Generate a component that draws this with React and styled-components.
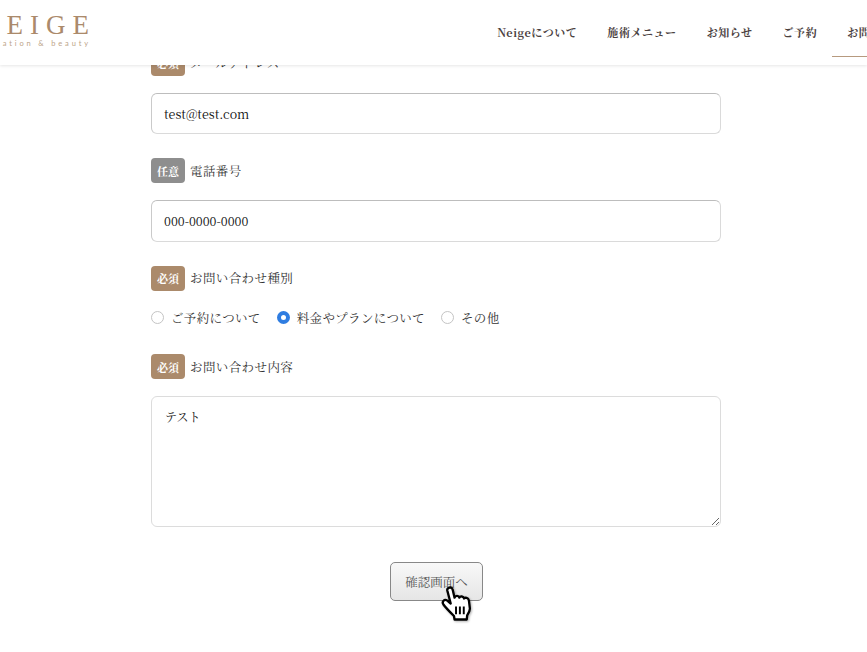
import React from 'react';
import styled, { createGlobalStyle } from 'styled-components';

const GlobalStyle = createGlobalStyle`
  html, body {
    margin: 0;
    padding: 0;
    background: #fff;
    overflow: hidden;
  }
  * { box-sizing: border-box; }
`;

const serif = `"Noto Serif CJK JP", "Liberation Serif", "Noto Sans CJK JP", serif`;

const Page = styled.div`
  position: relative;
  width: 867px;
  height: 652px;
  overflow: hidden;
  font-family: ${serif};
  color: #222;
`;

const Header = styled.header`
  position: absolute;
  top: 0;
  left: 0;
  right: 0;
  height: 65px;
  background: #fff;
  box-shadow: 0 1px 3px rgba(0, 0, 0, 0.1);
  display: flex;
  justify-content: space-between;
  z-index: 2;
`;

const Logo = styled.div`
  margin: 11px 0 0 -30px;
  display: flex;
  flex-direction: column;
  align-items: flex-end;
  width: 119px;
  color: #ab8a6b;
`;

const LogoName = styled.div`
  font-family: "Liberation Serif", serif;
  font-size: 27px;
  line-height: 29px;
  letter-spacing: 7px;
  margin-right: -7px;
  white-space: nowrap;
`;

const LogoSub = styled.div`
  font-family: "Lato", sans-serif;
  font-size: 7.5px;
  line-height: 8px;
  letter-spacing: 2.85px;
  margin-right: -2px;
  white-space: nowrap;
  color: #bda489;
`;

const Nav = styled.nav`
  display: flex;
  margin-right: -64.5px;
`;

const NavItem = styled.a`
  display: block;
  height: 57px;
  padding: 24px 15px 0;
  font-size: 11px;
  line-height: 17px;
  font-weight: 700;
  letter-spacing: 0.55px;
  color: #4a4040;
  white-space: nowrap;
  border-bottom: 1px solid ${(p) => (p.$active ? '#b79a7f' : 'transparent')};
`;

const Form = styled.form`
  width: 570px;
  margin-left: 151px;
  padding-top: 50.5px;
  display: flex;
  flex-direction: column;
`;

const Field = styled.div`
  display: flex;
  flex-direction: column;
  margin-bottom: 24px;
`;

const LabelRow = styled.div`
  display: flex;
  align-items: center;
  gap: 5px;
  height: 25px;
  margin-bottom: 17px;
  font-size: 12.5px;
  letter-spacing: 0.4px;
  color: #333;
`;

const Badge = styled.span`
  width: 34px;
  height: 25px;
  border-radius: 4px;
  background: ${(p) => (p.$optional ? '#8e8e8e' : '#ab8a6b')};
  color: #fff;
  font-size: 11px;
  font-weight: 700;
  letter-spacing: 0;
  display: flex;
  align-items: center;
  justify-content: center;
`;

const TextInput = styled.input`
  width: 100%;
  height: 41.5px;
  padding: 1px 12px 0;
  border: 1px solid;
  border-color: #bdbdbd #dadada #dadada #cacaca;
  border-radius: 6px;
  background: #fff;
  font-family: ${serif};
  font-size: 12.5px;
  color: #111;
  outline: none;
`;

const RadioGroup = styled.div`
  display: flex;
  align-items: center;
  height: 20px;
  margin-bottom: 2.5px;
`;

const RadioLabel = styled.label`
  display: flex;
  align-items: center;
  gap: 7px;
  margin-right: 16px;
  font-size: 12.5px;
  letter-spacing: 0.35px;
  color: #333;
`;

const RadioMark = styled.span`
  width: 13px;
  height: 13px;
  border-radius: 50%;
  background: #fff;
  border: ${(p) => (p.$checked ? '4px solid #2f7de1' : '1px solid #c4c4c4')};
`;

const TextArea = styled.textarea`
  display: block;
  width: 100%;
  height: 131px;
  padding: 12px 13px;
  border: 1px solid #dcdcdc;
  border-radius: 6px;
  background: #fff;
  font-family: ${serif};
  font-size: 12px;
  line-height: 16px;
  color: #111;
  outline: none;
`;

const Actions = styled.div`
  display: flex;
  justify-content: center;
  margin-top: 11px;
  margin-left: 1px;
`;

const SubmitWrap = styled.div`
  position: relative;
`;

const SubmitButton = styled.button`
  display: block;
  width: 93px;
  height: 39px;
  border: 1px solid #888;
  border-radius: 5px;
  background: linear-gradient(#f8f8f8, #e6e6e6);
  font-family: ${serif};
  font-size: 12.5px;
  color: #555;
  padding: 0;
`;

const Pointer = styled.svg`
  position: absolute;
  left: 51px;
  top: 24px;
  width: 31px;
  height: 35px;
  filter: drop-shadow(1px 1px 1px rgba(0, 0, 0, 0.3));
`;

// hand cursor sitting over the button
const HandCursor = () => (
  <Pointer viewBox="0 0 32 36">
    <path
      d="M6.500 4.500C6 1.500 11 0 12 3.500l2 8.500c.8-2.600 4.400-2.400 5 0 .8-2 4.200-1.600 4.800.8 1-1.400 4.400-.8 5 2l1 8.200c.2 2.600-1.400 5-2.800 7.200l-.4 4.300H14l-.6-3.600C10.500 28 5 22.500 2.500 19c-2-3 1-6 4-4l3.500 3z"
      fill="#fff"
      stroke="#000"
      strokeWidth="2.400"
      strokeLinejoin="round"
    />
    <path d="M15.500 21v8M19.500 21v8M23.500 21v8" stroke="#000" strokeWidth="2" fill="none" />
  </Pointer>
);

const navItems = ['Neigeについて', '施術メニュー', 'お知らせ', 'ご予約', 'お問い合わせ'];
const radios = [
  { label: 'ご予約について' },
  { label: '料金やプランについて', checked: true },
  { label: 'その他' },
];

export default function App() {
  return (
    <Page>
      <GlobalStyle />
      <Header>
        <Logo>
          <LogoName>NEIGE</LogoName>
          <LogoSub>relaxation &amp; beauty</LogoSub>
        </Logo>
        <Nav>
          {navItems.map((item, i) => (
            <NavItem key={item} $active={i === navItems.length - 1}>
              {item}
            </NavItem>
          ))}
        </Nav>
      </Header>
      <Form>
        <Field>
          <LabelRow>
            <Badge>必須</Badge>メールアドレス
          </LabelRow>
          <TextInput defaultValue="test@test.com" />
        </Field>
        <Field>
          <LabelRow>
            <Badge $optional>任意</Badge>電話番号
          </LabelRow>
          <TextInput defaultValue="000-0000-0000" />
        </Field>
        <Field>
          <LabelRow>
            <Badge>必須</Badge>お問い合わせ種別
          </LabelRow>
          <RadioGroup>
            {radios.map((r) => (
              <RadioLabel key={r.label}>
                <RadioMark $checked={r.checked} />
                {r.label}
              </RadioLabel>
            ))}
          </RadioGroup>
        </Field>
        <Field>
          <LabelRow>
            <Badge>必須</Badge>お問い合わせ内容
          </LabelRow>
          <TextArea defaultValue="テスト" />
        </Field>
        <Actions>
          <SubmitWrap>
            <SubmitButton type="button">確認画面へ</SubmitButton>
            <HandCursor />
          </SubmitWrap>
        </Actions>
      </Form>
    </Page>
  );
}
